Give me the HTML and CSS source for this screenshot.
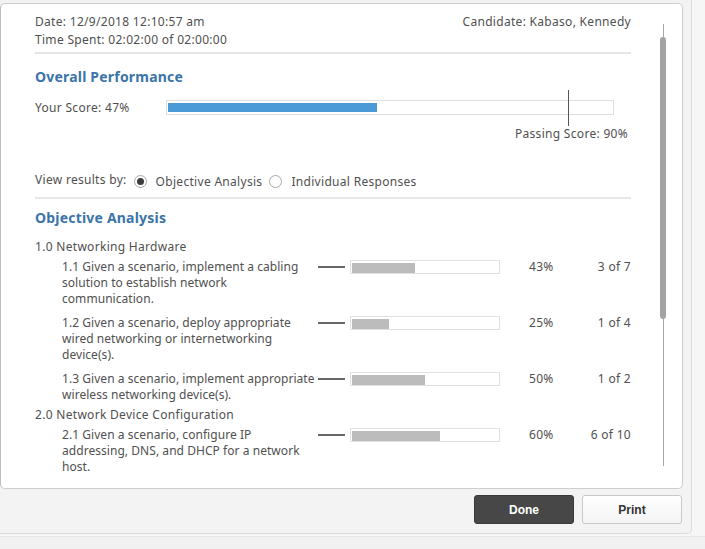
FILE: index.html
```html
<!DOCTYPE html>
<html>
<head>
<meta charset="utf-8">
<link rel="stylesheet" href="styles.css">
</head>
<body>
<div class="dialog">
  <div class="panel">
    <div class="content">
      <div class="meta">
        <div class="meta-left">
          <div class="line">Date: 12/9/2018 12:10:57 am</div>
          <div class="line">Time Spent: 02:02:00 of 02:00:00</div>
        </div>
        <div class="line">Candidate: Kabaso, Kennedy</div>
      </div>
      <div class="sep"></div>
      <h2 class="heading h-overall">Overall Performance</h2>
      <div class="score-row">
        <span class="score-label">Your Score: 47%</span>
        <div class="score-bar">
          <div class="score-fill" style="width:47%"></div>
          <div class="pass-mark" style="left:90%"></div>
        </div>
      </div>
      <div class="passing">Passing Score: 90%</div>
      <div class="view-by">
        <span>View results by:</span>
        <span class="radio checked"></span>
        <span class="opt">Objective Analysis</span>
        <span class="radio"></span>
        <span class="opt">Individual Responses</span>
      </div>
      <div class="sep sep2"></div>
      <h2 class="heading h-obj">Objective Analysis</h2>

      <div class="cat">1.0 Networking Hardware</div>
      <div class="item first">
        <div class="desc">1.1 Given a scenario, implement a cabling<br>solution to establish network<br>communication.</div>
        <div class="dash"></div>
        <div class="bar"><div class="fill" style="width:43%"></div></div>
        <div class="pct">43%</div>
        <div class="count">3 of 7</div>
      </div>
      <div class="item">
        <div class="desc">1.2 Given a scenario, deploy appropriate<br>wired networking or internetworking<br>device(s).</div>
        <div class="dash"></div>
        <div class="bar"><div class="fill" style="width:25%"></div></div>
        <div class="pct">25%</div>
        <div class="count">1 of 4</div>
      </div>
      <div class="item">
        <div class="desc">1.3 Given a scenario, implement appropriate<br>wireless networking device(s).</div>
        <div class="dash"></div>
        <div class="bar"><div class="fill" style="width:50%"></div></div>
        <div class="pct">50%</div>
        <div class="count">1 of 2</div>
      </div>
      <div class="cat">2.0 Network Device Configuration</div>
      <div class="item first">
        <div class="desc">2.1 Given a scenario, configure IP<br>addressing, DNS, and DHCP for a network<br>host.</div>
        <div class="dash"></div>
        <div class="bar"><div class="fill" style="width:60%"></div></div>
        <div class="pct">60%</div>
        <div class="count">6 of 10</div>
      </div>
    </div>
    <div class="scroll-track"></div>
    <div class="scroll-thumb"></div>
  </div>
  <div class="buttons">
    <button class="btn btn-done">Done</button>
    <button class="btn btn-print">Print</button>
  </div>
</div>
<div class="footer-strip"></div>
</body>
</html>
```

FILE: styles.css
```css
html, body {
  margin: 0;
  padding: 0;
}
body {
  background: #f6f6f6;
  font-family: "Noto Sans", "Open Sans", sans-serif;
  font-size: 12px;
  letter-spacing: 0.3px;
  color: #505050;
  width: 705px;
  height: 549px;
  overflow: hidden;
}
.dialog {
  width: 692px;
  height: 534px;
  box-sizing: border-box;
  background: #f3f3f3;
  border-right: 1px solid #dcdcdc;
  border-bottom: 1px solid #dcdcdc;
  border-bottom-right-radius: 5px;
  padding-top: 3px;
  padding-right: 9px;
}
.panel {
  position: relative;
  width: 683px;
  height: 486px;
  box-sizing: border-box;
  background: #fff;
  border: 1px solid #cdcdcd;
  border-left-color: #bdbdbd;
  border-radius: 5px;
  overflow: hidden;
}
.content {
  padding: 9px 0 0 34px;
  width: 596px;
}
.line {
  line-height: 18px;
  height: 18px;
}
.meta {
  display: flex;
  justify-content: space-between;
}
.sep {
  height: 2px;
  background: #e6e6e6;
  margin-top: 3px;
}
.heading {
  margin: 13px 0 0 0;
  font-size: 14px;
  letter-spacing: 0.2px;
  line-height: 20px;
  font-weight: bold;
  color: #3b74a9;
}
.score-row {
  display: flex;
  align-items: center;
  margin-top: 13px;
  height: 15px;
}
.score-label {
  width: 131px;
  line-height: 15px;
}
.score-bar {
  position: relative;
  width: 448px;
  height: 15px;
  box-sizing: border-box;
  border: 1px solid #dedede;
  padding: 2px 1px;
  background: #fff;
}
.score-fill {
  height: 9px;
  background: #4a9ad8;
}
.pass-mark {
  position: absolute;
  top: -11px;
  width: 1px;
  height: 36px;
  background: #555;
}
.passing {
  margin-top: 11px;
  line-height: 16px;
  text-align: right;
  padding-right: 3px;
}
.view-by {
  display: flex;
  align-items: center;
  margin-top: 29px;
  height: 18px;
  line-height: 18px;
}
.radio {
  width: 13px;
  height: 13px;
  box-sizing: border-box;
  border: 1px solid #a9a9a9;
  border-radius: 50%;
  background: #fdfdfd;
  margin: 3px 9px 0 7px;
  position: relative;
}
.radio.checked::after {
  content: "";
  position: absolute;
  left: 2px;
  top: 2px;
  width: 7px;
  height: 7px;
  border-radius: 50%;
  background: #3c3c3c;
}
.opt {
  padding-top: 3px;
}
.sep2 {
  margin-top: 8px;
}
.h-obj {
  margin-top: 9px;
}
.cat {
  margin-top: 11px;
  line-height: 16px;
}
.item + .cat {
  margin-top: 4px;
}
.item {
  display: flex;
  align-items: flex-start;
  margin-top: 8px;
  padding-left: 27px;
  line-height: 16px;
}
.item.first {
  margin-top: 4px;
}
.desc {
  width: 256px;
  white-space: nowrap;
  letter-spacing: 0.05px;
}
.dash {
  width: 27px;
  height: 2px;
  background: #666;
  margin-top: 7px;
}
.bar {
  width: 150px;
  height: 14px;
  box-sizing: border-box;
  border: 1px solid #e0e0e0;
  padding: 2px 1px;
  margin: 1px 0 0 5px;
}
.fill {
  height: 10px;
  background: #bcbcbc;
}
.pct {
  margin-left: 29px;
  width: 40px;
}
.count {
  flex: 1;
  text-align: right;
}
.scroll-track {
  position: absolute;
  left: 662px;
  top: 20px;
  width: 1px;
  height: 442px;
  background: #a8a8a8;
}
.scroll-thumb {
  position: absolute;
  left: 659px;
  top: 33px;
  width: 6px;
  height: 282px;
  border-radius: 3px;
  background: #a3a3a3;
}
.buttons {
  display: flex;
  justify-content: flex-end;
  gap: 8px;
  margin-top: 6px;
}
.btn {
  width: 100px;
  height: 29px;
  border-radius: 3px;
  font-family: "Liberation Sans", Arial, sans-serif;
  font-weight: bold;
  font-size: 12px;
  letter-spacing: 0;
  cursor: pointer;
}
.btn-done {
  background: #474747;
  border: 1px solid #3a3a3a;
  color: #fff;
}
.btn-print {
  background: linear-gradient(#ffffff, #f4f4f4);
  border: 1px solid #c8c8c8;
  color: #333;
}
.footer-strip {
  margin-top: 2px;
  height: 13px;
  border-top: 1px solid #e6e6e6;
  background: #f1f1f1;
}
```
